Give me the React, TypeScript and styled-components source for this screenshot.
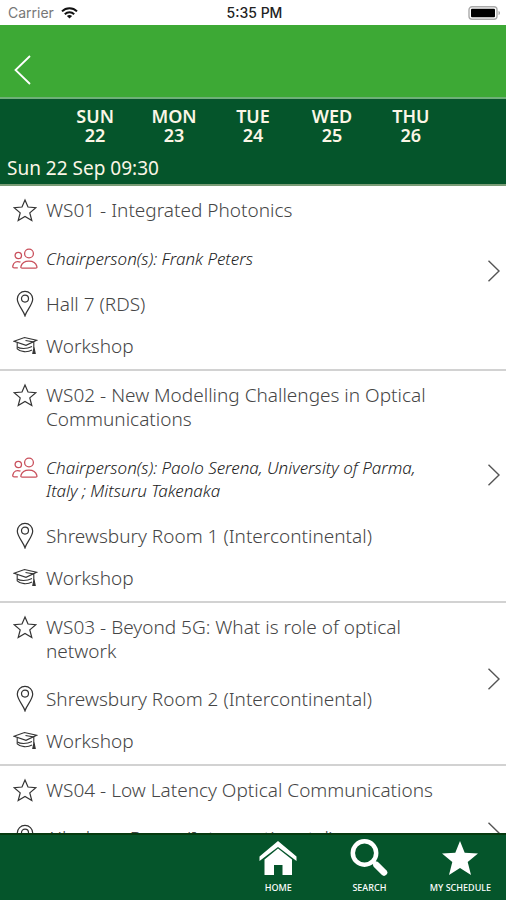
import React from "react";
import styled, { createGlobalStyle } from "styled-components";

const GlobalStyle = createGlobalStyle`
  *, *::before, *::after { box-sizing: border-box; }
  body {
    margin: 0;
    background: #fff;
    color: #454545;
    font-family: "Noto Sans", "Open Sans", sans-serif;
  }
  button { font: inherit; color: inherit; border: 0; padding: 0; background: none; cursor: pointer; }
  a { color: inherit; text-decoration: none; }
  svg { display: block; flex: none; }
`;

const Screen = styled.div`
  display: flex;
  flex-direction: column;
  height: 100vh;
`;

const StatusBar = styled.div`
  display: grid;
  grid-template-columns: 1fr auto 1fr;
  align-items: center;
  flex: none;
  height: 25px;
  padding: 0 5px 0 8px;
  font-family: Inter, sans-serif;
  font-size: 14px;
  color: #222;
`;

const Carrier = styled.div`
  display: flex;
  align-items: center;
  gap: 7px;
  color: #777;
`;

const Clock = styled.time`
  font-weight: 500;
`;

const Battery = styled.div`
  justify-self: end;
`;

const Header = styled.header`
  display: flex;
  align-items: center;
  flex: none;
  height: 74px;
  padding: 18px 8px 0;
  background: #3da935;
  border-bottom: 2px solid #6fb078;
`;

const BackButton = styled.button`
  color: #fff;
`;

const DayBar = styled.nav`
  flex: none;
  background: #05552b;
  color: #fbf6e6;
  border-bottom: 2px solid #7a9c76;
`;

const Days = styled.div`
  display: grid;
  grid-template-columns: repeat(5, 1fr);
  padding: 8px 11% 0;
`;

const Day = styled.button`
  display: flex;
  flex-direction: column;
  align-items: center;
  font-size: 18px;
  font-weight: 600;
  line-height: 19px;
`;

const SlotTitle = styled.h1`
  margin: 9px 0 0;
  padding: 0 7px 2px;
  font-size: 19px;
  font-weight: 400;
  line-height: 28px;
`;

const SessionList = styled.ul`
  flex: 1;
  min-height: 0;
  margin: 0;
  padding: 0;
  list-style: none;
  overflow-y: auto;
  scrollbar-width: none;
`;

const Session = styled.li`
  display: flex;
  padding-left: 12px;
  border-bottom: 2px solid #d2d2d2;
`;

const Details = styled.div`
  flex: 1;
  min-width: 0;
  padding: 12px 0 11px;
`;

const Line = styled.div<{ $space: number }>`
  display: grid;
  grid-template-columns: 26px 1fr;
  column-gap: 8px;
  margin-top: ${(p) => p.$space}px;
  font-size: 19px;
  font-weight: 300;
  line-height: 24px;
`;

const IconSlot = styled.span`
  display: flex;
  align-items: center;
  justify-content: center;
  height: 23px;
  color: #333;
`;

const FavouriteButton = styled.button`
  display: flex;
  align-items: center;
  justify-content: center;
  height: 24px;
  color: #333;
`;

const Title = styled.h2`
  margin: 0;
  font: inherit;
`;

const Chair = styled.em`
  font-size: 17px;
  line-height: 23px;
  color: #222;
`;

const OpenLink = styled.a`
  display: flex;
  flex-direction: column;
  align-items: center;
  flex: none;
  width: 72px;
  padding: 16px 0 0 48px;
  color: #555;
  &::before { content: ""; flex: 2; }
  &::after { content: ""; flex: 3; }
`;

const TabBar = styled.nav`
  display: flex;
  justify-content: flex-end;
  flex: none;
  height: 67px;
  background: #05552b;
  border-top: 2px solid #063a10;
`;

const Tab = styled.a`
  display: flex;
  flex-direction: column;
  align-items: center;
  width: 18%;
  padding-top: 4px;
  color: #fff;
`;

const TabLabel = styled.span`
  margin-top: 5px;
  font-size: 9px;
  font-weight: 500;
  line-height: 12px;
  white-space: nowrap;
`;

const WifiIcon = () => (
  <svg width="17" height="12" viewBox="0 0 17 12" fill="none" stroke="#111" strokeWidth="2">
    <path d="M1 4.4C5.2.2 11.8.2 16 4.4" />
    <path d="M3.8 7.3c2.7-2.6 6.7-2.6 9.4 0" />
    <path d="M8.500 11.600 5.900 9c1.500-1.400 3.700-1.400 5.200 0z" fill="#111" stroke="none" />
  </svg>
);

const BatteryIcon = () => (
  <svg width="33" height="14" viewBox="0 0 33 14">
    <rect x="1" y=".8" width="28" height="12.400" rx="3" fill="#fff" stroke="#aaa" strokeWidth="1.400" />
    <rect x="3" y="2.700" width="24" height="8.600" rx="1" fill="#000" />
    <path d="M30.500 5c2 .6 2 3.400 0 4z" fill="#aaa" />
  </svg>
);

const BackIcon = () => (
  <svg width="30" height="32" viewBox="0 0 30 32" fill="none" stroke="currentColor" strokeWidth="1.800">
    <path d="M22 2 7.500 16 22 30" />
  </svg>
);

const StarIcon = () => (
  <svg width="24" height="24" viewBox="0 0 24 24" fill="none" stroke="currentColor" strokeWidth="1.200">
    <path d="m12 2 3 7 7.800.7-6 5.200 2 7.600-6.800-4-6.800 4 2-7.600-6-5.200L9 9z" />
  </svg>
);

const PeopleIcon = () => (
  <svg width="26" height="22" viewBox="0 0 26 22" fill="none" stroke="#c9505c" strokeWidth="1.300">
    <circle cx="17" cy="5.500" r="4.400" />
    <circle cx="6.300" cy="7.500" r="3.200" />
    <path d="M10.300 20.200c-1.300 0-1.700-.7-1.400-1.700 2-7.300 14-7.300 16 0 .3 1-.1 1.700-1.400 1.700z" />
    <path d="M8.500 14.200c-3.600-1.600-6.900-.2-7.700 3.800-.2 1.200.3 1.900 1.500 1.900h3.500" />
  </svg>
);

const PinIcon = () => (
  <svg width="18" height="27" viewBox="0 0 18 27" fill="none" stroke="currentColor" strokeWidth="1.200">
    <path d="M9 25.800C7.500 20.500 1.300 14.600 1.300 9a7.700 7.700 0 0 1 15.400 0c0 5.600-6.200 11.500-7.700 16.800z" />
    <circle cx="9" cy="8.600" r="3.500" />
  </svg>
);

const CapIcon = () => (
  <svg width="25" height="19" viewBox="0 0 25 19" fill="none" stroke="currentColor" strokeWidth="1.100">
    <path d="M1 5.200 11.500 1.500 23.500 4.300 13 9.300z" />
    <path d="M4.200 6.700v6.100c3.200 3.400 10.400 3.800 14.800 1.200" />
    <path d="M4.400 11c2.500 1.800 9 2.300 14.600-.5" />
    <path d="M12.500 4.500 20.800 6v6" />
    <path d="m21 11.500-1.200 6h2.400z" fill="currentColor" />
  </svg>
);

const ChevronIcon = () => (
  <svg width="14" height="22" viewBox="0 0 14 22" fill="none" stroke="currentColor" strokeWidth="1.400">
    <path d="m1.500.8 10.500 10.200L1.500 21.200" />
  </svg>
);

const HomeIcon = () => (
  <svg width="38" height="38" viewBox="0 0 38 38">
    <path fill="#fff" d="m19 2 18.500 15.500v4.500L19 8 .5 22v-4.500z" />
    <path fill="#fff" d="m19 9.500 14 11V36h-9.500V26h-8.500v10H5.500V20.500z" />
  </svg>
);

const SearchIcon = () => (
  <svg width="38" height="38" viewBox="0 0 38 38" fill="none" stroke="#fff">
    <circle cx="14.500" cy="14" r="11.700" strokeWidth="4.500" />
    <path d="m23.500 23 2.500 2.500" strokeWidth="4" />
    <path d="m26.500 26 7.500 7.500" strokeWidth="6.500" strokeLinecap="round" />
  </svg>
);

const SolidStarIcon = () => (
  <svg width="38" height="38" viewBox="0 0 38 38">
    <path fill="#fff" d="m19 2 4.700 11.700 13.300.8-10.300 8.500L30 36l-11-7-11 7 3.300-13L1 14.500l13.300-.8z" />
  </svg>
);

const days = [
  ["SUN", "22"],
  ["MON", "23"],
  ["TUE", "24"],
  ["WED", "25"],
  ["THU", "26"],
];

type SessionData = { title: string; chair?: string; place: string };

const sessions: SessionData[] = [
  { title: "WS01 - Integrated Photonics", chair: "Chairperson(s): Frank Peters", place: "Hall 7 (RDS)" },
  {
    title: "WS02 - New Modelling Challenges in Optical Communications",
    chair: "Chairperson(s): Paolo Serena, University of Parma, Italy ; Mitsuru Takenaka",
    place: "Shrewsbury Room 1 (Intercontinental)",
  },
  { title: "WS03 - Beyond 5G: What is role of optical network", place: "Shrewsbury Room 2 (Intercontinental)" },
  { title: "WS04 - Low Latency Optical Communications", place: "Ailesbury Room (Intercontinental)" },
];

const tabs = [
  { label: "HOME", icon: <HomeIcon /> },
  { label: "SEARCH", icon: <SearchIcon /> },
  { label: "MY SCHEDULE", icon: <SolidStarIcon /> },
];

const SessionRow = ({ title, chair, place }: SessionData) => (
  <Session>
    <Details>
      <Line $space={0}>
        <FavouriteButton aria-label="Add to my schedule"><StarIcon /></FavouriteButton>
        <Title>{title}</Title>
      </Line>
      {chair && (
        <Line $space={25}>
          <IconSlot><PeopleIcon /></IconSlot>
          <Chair>{chair}</Chair>
        </Line>
      )}
      <Line $space={chair ? 22 : 24}>
        <IconSlot><PinIcon /></IconSlot>
        <span>{place}</span>
      </Line>
      <Line $space={18}>
        <IconSlot><CapIcon /></IconSlot>
        <span>Workshop</span>
      </Line>
    </Details>
    <OpenLink href="#session" aria-label={`Open ${title}`}><ChevronIcon /></OpenLink>
  </Session>
);

export default function App() {
  return (
    <Screen>
      <GlobalStyle />
      <StatusBar>
        <Carrier>Carrier<WifiIcon /></Carrier>
        <Clock>5:35 PM</Clock>
        <Battery><BatteryIcon /></Battery>
      </StatusBar>
      <Header>
        <BackButton aria-label="Back"><BackIcon /></BackButton>
      </Header>
      <DayBar>
        <Days>
          {days.map(([name, date]) => (
            <Day key={name}><span>{name}</span><span>{date}</span></Day>
          ))}
        </Days>
        <SlotTitle>Sun 22 Sep 09:30</SlotTitle>
      </DayBar>
      <SessionList>
        {sessions.map((s) => <SessionRow key={s.title} {...s} />)}
      </SessionList>
      <TabBar>
        {tabs.map((t) => (
          <Tab key={t.label} href="#tab">{t.icon}<TabLabel>{t.label}</TabLabel></Tab>
        ))}
      </TabBar>
    </Screen>
  );
}
